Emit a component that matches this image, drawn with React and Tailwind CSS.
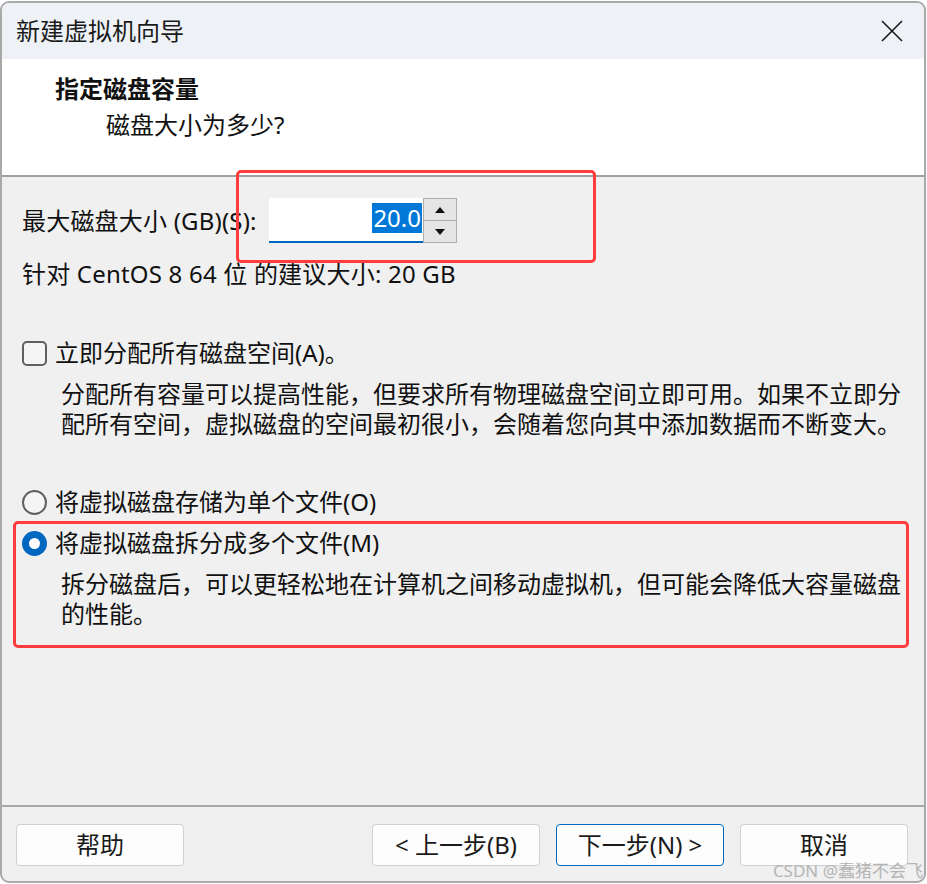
import React from "react";

const font = { fontFamily: "'Noto Sans', 'Noto Sans CJK SC', sans-serif" };

function Spin() {
  return (
    <div className="flex flex-col w-[34px] h-[45px] border border-[#adadad] bg-[#f0f0f0]">
      <div className="flex-1 flex items-center justify-center border-b border-[#adadad] bg-[#e5e5e5]">
        <svg width="10" height="6" viewBox="0 0 10 6"><path d="M5 0 L10 6 L0 6 Z" fill="#111" /></svg>
      </div>
      <div className="flex-1 flex items-center justify-center bg-[#e5e5e5]">
        <svg width="10" height="6" viewBox="0 0 10 6"><path d="M0 0 L10 0 L5 6 Z" fill="#111" /></svg>
      </div>
    </div>
  );
}

function Btn({ children, primary }) {
  return (
    <div
      className={
        "w-[168px] h-[42px] rounded-[4px] bg-[#fdfdfd] flex items-center justify-center text-[24px] text-[#1a1a1a] border " +
        (primary ? "border-[#0067c0]" : "border-[#d0d0d0]")
      }
    >
      {children}
    </div>
  );
}

export default function App() {
  return (
    <div className="w-[927px] h-[884px] bg-white relative overflow-hidden" style={font}>
      <div className="absolute left-0 top-[1px] w-[926px] h-[882px] border-2 border-[#a9a9a9] rounded-[9px] overflow-hidden flex flex-col bg-[#f0f0f0]">
        {/* title bar */}
        <div className="h-[56px] bg-[#eef2f7] flex items-center justify-between pl-[14px] pr-[21px] shrink-0">
          <div className="text-[24px] text-[#1a1a1a] leading-[30px]">新建虚拟机向导</div>
          <svg width="22" height="22" viewBox="0 0 22 22">
            <path d="M1 1 L21 21 M21 1 L1 21" stroke="#1a1a1a" strokeWidth="1.6" />
          </svg>
        </div>
        {/* header */}
        <div className="h-[118px] bg-white shrink-0 pl-[53px] pt-[15px] border-b-2 border-[#a0a0a0]">
          <div className="text-[24px] font-bold leading-[30px] text-[#111]">指定磁盘容量</div>
          <div className="text-[24px] leading-[30px] text-[#111] ml-[51px] mt-[6px]">磁盘大小为多少?</div>
        </div>
        {/* content */}
        <div className="flex-1 flex flex-col pl-[20px] pt-[21px] text-[24px] text-[#111] leading-[30px]">
          <div className="flex items-center">
            <div className="w-[247px] tracking-[0.2px]">最大磁盘大小 (GB)(S):</div>
            <div className="w-[154px] h-[45px] bg-white border-b-2 border-[#0067c0] flex items-center justify-end pr-[1px]">
              <span className="bg-[#0078d7] text-white leading-[30px] px-[1px] mt-[-4px]">20.0</span>
            </div>
            <Spin />
          </div>
          <div className="mt-[16px] tracking-[0.2px]">针对 CentOS 8 64 位 的建议大小: 20 GB</div>
          <div className="flex items-center mt-[49px]">
            <div className="w-[25px] h-[25px] rounded-[5px] border-2 border-[#5f5f5f] bg-[#f5f5f5] mr-[8px]" />
            <div>立即分配所有磁盘空间(A)。</div>
          </div>
          <div className="ml-[39px] mt-[11px] whitespace-nowrap">
            <div>分配所有容量可以提高性能，但要求所有物理磁盘空间立即可用。如果不立即分</div>
            <div>配所有空间，虚拟磁盘的空间最初很小，会随着您向其中添加数据而不断变大。</div>
          </div>
          <div className="flex items-center mt-[48px]">
            <div className="w-[25px] h-[25px] rounded-full border-2 border-[#5f5f5f] bg-[#f5f5f5] mr-[8px]" />
            <div>将虚拟磁盘存储为单个文件(O)</div>
          </div>
          <div className="flex items-center mt-[11px]">
            <div className="w-[25px] h-[25px] rounded-full bg-[#0067c0] mr-[8px] flex items-center justify-center">
              <div className="w-[11px] h-[11px] rounded-full bg-white" />
            </div>
            <div>将虚拟磁盘拆分成多个文件(M)</div>
          </div>
          <div className="ml-[39px] mt-[11px] whitespace-nowrap">
            <div>拆分磁盘后，可以更轻松地在计算机之间移动虚拟机，但可能会降低大容量磁盘</div>
            <div>的性能。</div>
          </div>
        </div>
        {/* footer */}
        <div className="h-[76px] shrink-0 border-t-2 border-[#a8a8a8] flex items-start pt-[17px] pl-[14px]">
          <Btn>帮助</Btn>
          <div className="ml-[188px] flex gap-[16px]">
            <Btn>&lt; 上一步(B)</Btn>
            <Btn primary>下一步(N) &gt;</Btn>
            <Btn>取消</Btn>
          </div>
        </div>
      </div>
      {/* annotation boxes */}
      <div className="absolute left-[236px] top-[170px] w-[360px] h-[93px] border-[3px] border-[#ff3b3b] rounded-[5px] pointer-events-none" />
      <div className="absolute left-[13px] top-[521px] w-[896px] h-[127px] border-[3px] border-[#ff3b3b] rounded-[5px] pointer-events-none" />
      {/* watermark */}
      <div className="absolute right-[4px] top-[859px] text-[17px] leading-[24px] text-[#b5b5b5]">CSDN @蠢猪不会飞</div>
    </div>
  );
}
